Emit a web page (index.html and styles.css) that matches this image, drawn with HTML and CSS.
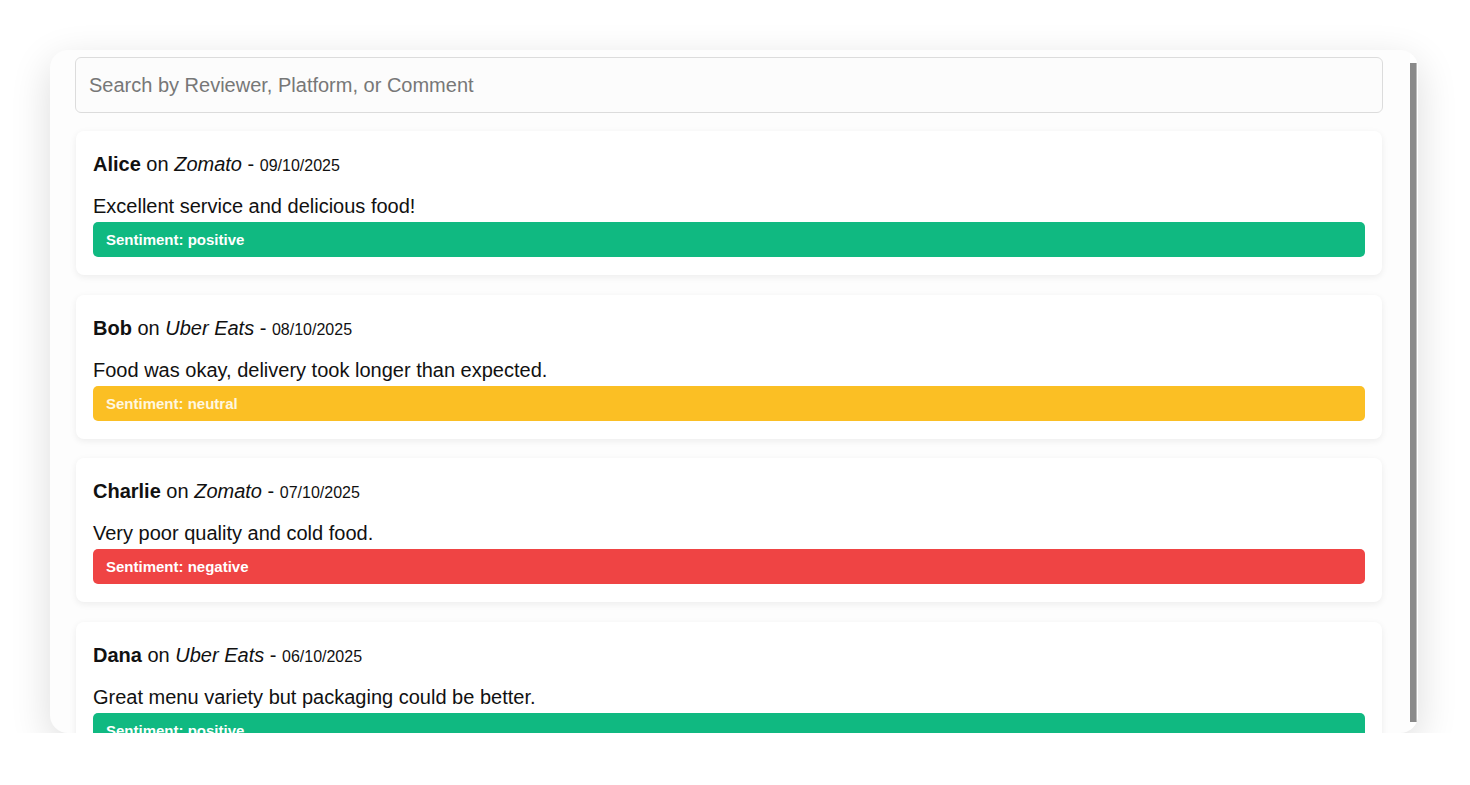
FILE: index.html
```html
<!DOCTYPE html>
<html lang="en">
<head>
  <meta charset="UTF-8">
  <title>Review Sentiment Feed</title>
  <link rel="stylesheet" href="styles.css">
</head>
<body>
  <div class="window">
    <div class="content">
      <input type="text" class="search" placeholder="Search by Reviewer, Platform, or Comment">

      <div class="review">
        <p class="review-head"><strong>Alice</strong> on <em>Zomato</em> - <span class="date">09/10/2025</span></p>
        <p class="comment">Excellent service and delicious food!</p>
        <div class="sentiment positive">Sentiment: positive</div>
      </div>

      <div class="review">
        <p class="review-head"><strong>Bob</strong> on <em>Uber Eats</em> - <span class="date">08/10/2025</span></p>
        <p class="comment">Food was okay, delivery took longer than expected.</p>
        <div class="sentiment neutral">Sentiment: neutral</div>
      </div>

      <div class="review">
        <p class="review-head"><strong>Charlie</strong> on <em>Zomato</em> - <span class="date">07/10/2025</span></p>
        <p class="comment">Very poor quality and cold food.</p>
        <div class="sentiment negative">Sentiment: negative</div>
      </div>

      <div class="review">
        <p class="review-head"><strong>Dana</strong> on <em>Uber Eats</em> - <span class="date">06/10/2025</span></p>
        <p class="comment">Great menu variety but packaging could be better.</p>
        <div class="sentiment positive">Sentiment: positive</div>
      </div>
    </div>

    <div class="scrollbar">
      <div class="thumb"></div>
    </div>
  </div>
</body>
</html>
```

FILE: styles.css
```css
body {
  margin: 0;
  padding: 50px 0 0 50px;
  background-color: #fff;
  font-family: "Liberation Sans", Arial, sans-serif;
  color: #111;
}

.window {
  width: 1368px;
  height: 683px;
  display: flex;
  background-color: #fdfdfd;
  border-radius: 18px;
  box-shadow: 0 12px 40px rgba(0, 0, 0, 0.14);
  overflow: hidden;
}

.content {
  flex: 1;
  padding: 7px 27px 0 25px;
}

.search {
  display: block;
  width: 100%;
  height: 56px;
  padding: 0 13px;
  font-family: inherit;
  font-size: 20px;
  background-color: #fcfcfc;
  border: 1px solid #dcdcdc;
  border-radius: 6px;
  box-sizing: border-box;
  outline: none;
}

.search::placeholder {
  color: #777;
}

.review {
  margin: 18px 1px 19.5px;
  padding: 18px 17px 18px;
  background-color: #fff;
  border-radius: 8px;
  box-shadow: 0 2px 7px rgba(0, 0, 0, 0.07);
}

.review-head {
  margin: 4px 0 0;
  height: 22px;
  font-size: 20px;
  line-height: 22px;
}

.review-head .date {
  font-size: 16px;
  line-height: 1;
}

.comment {
  margin: 20px 0 5px;
  height: 22px;
  font-size: 20px;
  line-height: 22px;
}

.sentiment {
  height: 35px;
  line-height: 35px;
  padding: 0 13px;
  border-radius: 5px;
  color: #fff;
  font-size: 15px;
  font-weight: bold;
}

.positive {
  background-color: #10b981;
}

.neutral {
  background-color: #fbbf24;
  color: #fff7e0;
}

.negative {
  background-color: #ef4444;
}

.scrollbar {
  width: 8px;
  padding: 13px 0 11px;
  background-color: #fff;
  display: flex;
}

.thumb {
  width: 6px;
  background-color: #8a8a8a;
  border-right: 1px solid #bbb;
}
```
